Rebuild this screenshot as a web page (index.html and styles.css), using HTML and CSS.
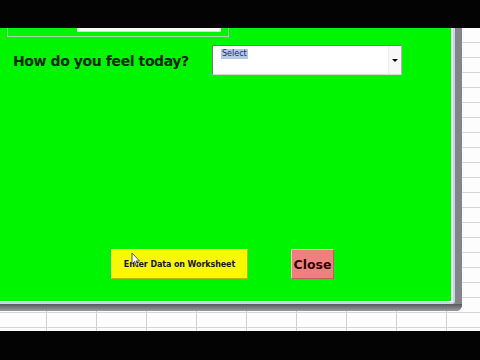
FILE: index.html
```html
<!DOCTYPE html>
<html>
<head>
<meta charset="utf-8">
<link rel="stylesheet" href="styles.css">
</head>
<body>
<div class="topbar"></div>
<div class="sheet">
  <div class="frame">
    <div class="frame-inner">
      <div class="form">
        <div class="topbox"><div class="topbox-field"></div></div>
        <div class="question-row">
          <div class="question">How do you feel today?</div>
          <div class="combo">
            <span class="combo-text">Select</span>
            <span class="combo-btn"><span class="arrow"></span></span>
          </div>
        </div>
        <div class="buttons">
          <button class="btn-enter">Enter Data on Worksheet
            <svg class="cursor" width="10" height="15" viewBox="0 0 10 15"><path d="M1 1 L1 12 L3.5 9.5 L5.5 14 L7 13.3 L5 9 L8.5 9 Z" fill="#fff" stroke="#555" stroke-width="1"/></svg>
          </button>
          <button class="btn-close">Close</button>
        </div>
      </div>
    </div>
  </div>
</div>
<div class="bottombar"></div>
</body>
</html>
```
FILE: styles.css
```css
html, body {
  margin: 0;
  padding: 0;
  background: #000;
  width: 480px;
  height: 360px;
  overflow: hidden;
}
.topbar {
  height: 28px;
  background: #030303;
}
.sheet {
  height: 303px;
  background-color: #fdfdfd;
  background-image:
    repeating-linear-gradient(to bottom, transparent 0, transparent 14px, #d6d6d6 14px, #d6d6d6 15px),
    repeating-linear-gradient(to right, transparent 0, transparent 46px, #d0d0d0 46px, #d0d0d0 47px, transparent 47px, transparent 50px);
  background-size: 100% 303px, 480px 303px;
  display: flex;
  align-items: flex-start;
}
.frame {
  width: 462px;
  height: 283px;
  box-sizing: border-box;
  background: linear-gradient(to right, #58585f, #84848c);
  padding: 0 7px 0 0;
  border-bottom-right-radius: 6px;
  position: relative;
  display: flex;
  flex-direction: column;
}
.frame::after {
  content: "";
  position: absolute;
  left: 0;
  right: 0;
  bottom: 0;
  height: 7px;
  background: linear-gradient(to bottom, #58585f, #9a9aa0);
  border-bottom-right-radius: 6px;
}
.frame-inner {
  flex: 1;
  margin-bottom: 7px;
  background: #eef3f8;
  border-right: 2px solid #c4d8ea;
  border-bottom: 2px solid #c4d8ea;
  padding: 0 2px 1px 0;
  border-bottom-right-radius: 3px;
  display: flex;
}
.form {
  flex: 1;
  background: #00f500;
  display: flex;
  flex-direction: column;
}
.topbox {
  margin-left: 7px;
  width: 222px;
  height: 9px;
  box-sizing: border-box;
  border: 1px solid #a8d8a8;
  border-top: none;
}
.topbox-field {
  margin-left: 69px;
  width: 144px;
  height: 3px;
  background: #fafafa;
  border-bottom: 1px solid #c8e8c8;
}
.question-row {
  display: flex;
  align-items: center;
  margin-top: 8px;
  padding-left: 13px;
}
.question {
  width: 199px;
  font-family: "DejaVu Sans", Verdana, sans-serif;
  font-weight: bold;
  font-size: 14px;
  letter-spacing: -0.4px;
  color: #082808;
  padding-top: 1px;
}
.combo {
  width: 190px;
  height: 30px;
  box-sizing: border-box;
  background: #fff;
  border-top: 1px solid #7a7a7a;
  border-left: 1px solid #7a7a7a;
  border-right: 1px solid #b0b0b0;
  border-bottom: 1px solid #d8d8d8;
  display: flex;
  align-items: flex-start;
  justify-content: space-between;
}
.combo-text {
  margin: 3px 0 0 8px;
  font-family: "DejaVu Sans", Tahoma, sans-serif;
  font-size: 8px;
  line-height: 10px;
  color: #1a2a6a;
  background: #b4c8e6;
  padding: 0 1px;
}
.combo-btn {
  width: 12px;
  align-self: stretch;
  display: flex;
  align-items: center;
  justify-content: center;
  background: #f8f8f8;
  border-left: 1px solid #ececec;
}
.arrow {
  width: 0;
  height: 0;
  border-left: 3px solid transparent;
  border-right: 3px solid transparent;
  border-top: 3px solid #000;
}
.buttons {
  display: flex;
  margin-top: 174px;
  padding-left: 111px;
  gap: 43px;
}
.buttons button {
  height: 30px;
  box-sizing: border-box;
  font-family: "DejaVu Sans", Tahoma, sans-serif;
  font-weight: bold;
  padding: 0;
  cursor: default;
}
.btn-enter {
  width: 137px;
  background: #f8f800;
  border: 1px solid #f0f0a0;
  border-right-color: #b8b800;
  border-bottom-color: #b8b800;
  font-size: 8px;
  letter-spacing: -0.1px;
  color: #1a1a00;
  position: relative;
}
.cursor {
  position: absolute;
  left: 19px;
  top: 2px;
}
.btn-close {
  width: 43px;
  background: #f08080;
  border: 1px solid #f8c0c0;
  border-right-color: #b86060;
  border-bottom-color: #b86060;
  font-size: 12.5px;
  color: #300000;
}
.bottombar {
  height: 29px;
  background: #030303;
}
```
